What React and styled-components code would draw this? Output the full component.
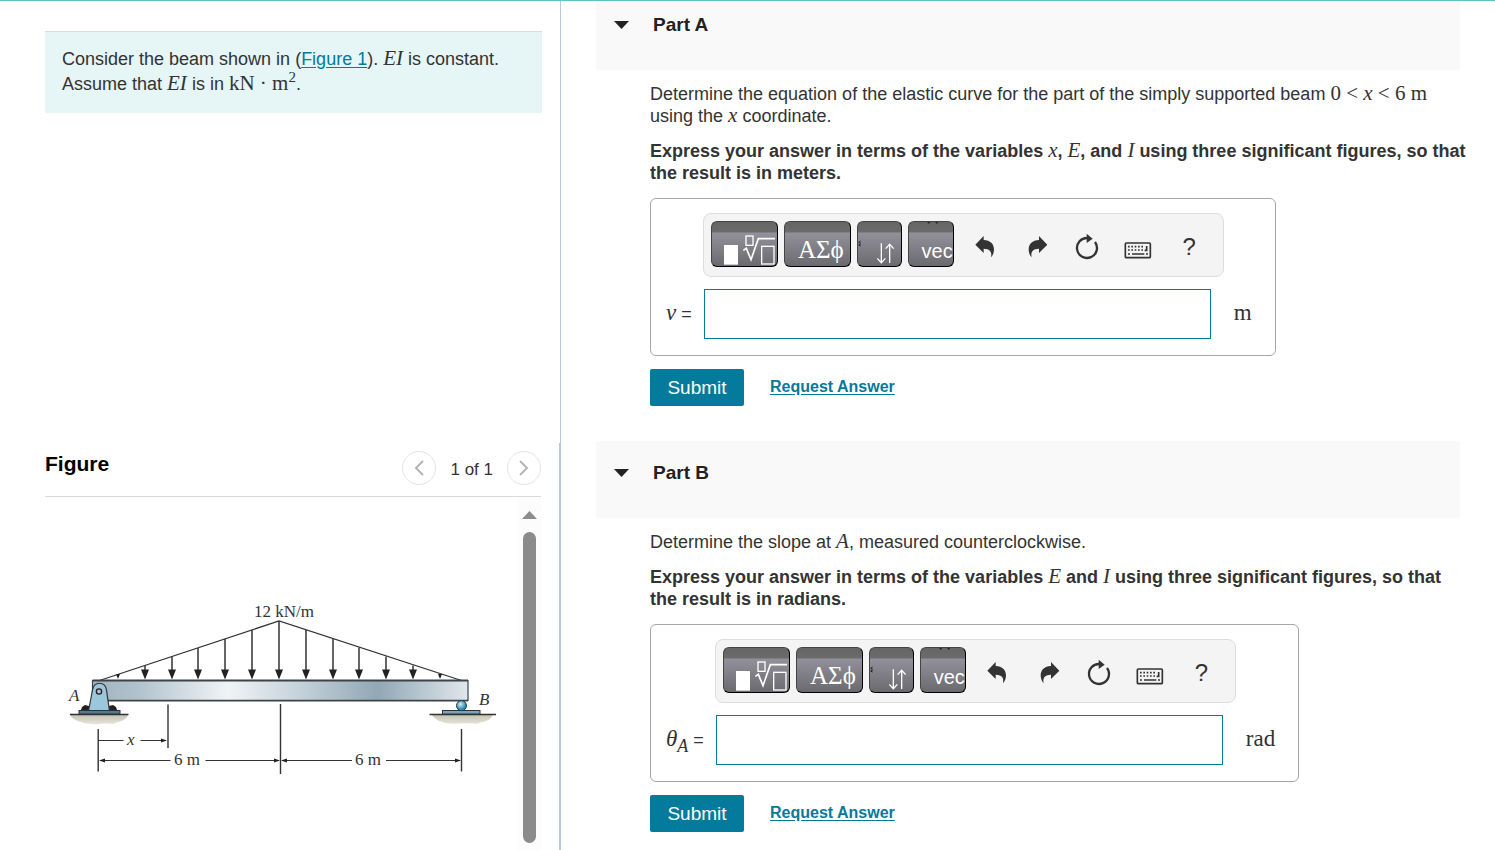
import styled, { createGlobalStyle } from "styled-components";

const GlobalStyle = createGlobalStyle`
    *, *::before, *::after {
        box-sizing: border-box;
    }

    body {
        margin: 0;
        background: #fff;
        color: #333;
        font-family: "Liberation Sans", Arial, sans-serif;
        font-size: 18px;
        line-height: 22px;
    }

    p, h2 {
        margin: 0;
    }

    button {
        font: inherit;
        color: inherit;
        cursor: pointer;
    }
`;

const Page = styled.div`
    display: grid;
    grid-template-columns: minmax(0, 561fr) minmax(0, 934fr);
    height: 100vh;
    border-top: 1px solid #5bc3c8;
    overflow: hidden;
`;

const Sidebar = styled.aside`
    display: grid;
    grid-template-rows: minmax(0, 442fr) minmax(0, 407fr);
    min-height: 0;
`;

const Intro = styled.section`
    padding: 30px 18px 0 45px;
    border-right: 1px solid #b8cbde;
`;

const IntroText = styled.p`
    padding: 15px 16px 16px 17px;
    background: #e6f5f6;
    border-top: 1px solid #d8dddd;
    line-height: 25px;
`;

const TextLink = styled.a`
    color: #047a9c;
    text-decoration: underline;
    text-underline-offset: 2px;
`;

const MathText = styled.span`
    font-family: "Liberation Serif", "Times New Roman", serif;
    font-size: ${({ $large }) => ($large ? "23px" : "21px")};
    font-weight: 400;
    font-style: ${({ $upright }) => ($upright ? "normal" : "italic")};
    line-height: 0;
    white-space: nowrap;

    sup, sub {
        font-size: ${({ $large }) => ($large ? "18px" : "15px")};
        line-height: 0;
    }
`;

const FigurePanel = styled.section`
    display: flex;
    flex-direction: column;
    min-height: 0;
    padding: 0 18px 0 45px;
    border-right: 2px solid #b8cbde;
`;

const FigureHeader = styled.header`
    display: flex;
    justify-content: space-between;
    height: 54px;
    border-bottom: 1px solid #d9d9d9;
`;

const FigureTitle = styled.h2`
    padding-top: 10px;
    font-size: 21px;
    color: #000;
`;

const Pager = styled.div`
    display: flex;
    align-items: center;
    gap: 14px;
    padding-bottom: 4px;
    font-size: 17px;

    span {
        padding-top: 4px;
    }
`;

const PagerButton = styled.button`
    display: flex;
    align-items: center;
    justify-content: center;
    width: 34px;
    height: 34px;
    padding: 0;
    background: #fff;
    border: 1px solid #e4e4e4;
    border-radius: 50%;
`;

const FigureBody = styled.div`
    display: flex;
    flex: 1;
    min-height: 0;
`;

const FigureView = styled.div`
    flex: 1;
    min-width: 0;
    padding: 98px 13px 0 15px;
    overflow: hidden;

    svg {
        display: block;
        width: 100%;
        max-width: 445px;
    }
`;

const ScrollTrack = styled.div`
    display: flex;
    flex-direction: column;
    align-items: center;
    gap: 13px;
    width: 23px;
    padding: 14px 0 7px;
    background: #fcfcfc;
`;

const ScrollThumb = styled.div`
    flex: 1;
    width: 13px;
    border-radius: 7px;
    background: #8b8b8b;
`;

const Main = styled.main`
    min-height: 0;
    padding: 0 19px 0 35px;
    overflow: hidden;
`;

const Part = styled.section`
    margin-bottom: 35px;

    &:first-child {
        margin-top: -8px;
    }
`;

const PartHeader = styled.header`
    display: flex;
    gap: 24px;
    height: 77px;
    margin-right: 16px;
    padding: 21px 18px;
    background: #f9f9f9;
`;

const PartToggle = styled.button`
    display: flex;
    align-items: center;
    height: 22px;
    padding: 0;
    border: 0;
    background: none;
`;

const PartTitle = styled.h2`
    font-size: 19px;
    color: #222;
`;

const PartBody = styled.div`
    padding: 13px 0 0 54px;
`;

const Instructions = styled.p`
    margin: 13px 0 14px;
    font-weight: 700;
`;

const AnswerBox = styled.form`
    display: grid;
    grid-template-columns: auto auto auto;
    align-items: center;
    row-gap: 12px;
    width: fit-content;
    padding: 14px 23px 16px 15px;
    border: 1px solid #a6a6a6;
    border-radius: 6px;
`;

const Toolbar = styled.div`
    grid-column: 2 / 4;
    display: flex;
    width: fit-content;
    padding: 7px 8px 9px 7px;
    background: #f4f4f4;
    border: 1px solid #ddd;
    border-radius: 8px;
`;

const PaletteButton = styled.button`
    display: flex;
    align-items: flex-end;
    justify-content: flex-end;
    width: ${({ $width }) => $width || 67}px;
    height: 46px;
    margin-right: 6px;
    padding: 0;
    overflow: hidden;
    color: #fff;
    background: linear-gradient(#656565 0, #6b6b6b 10px, #92919b 11px, #6a6a6e 100%);
    border: 1px solid #000;
    border-top-color: #444;
    border-left-color: #444;
    border-radius: 6px;

    svg {
        flex: none;
    }
`;

const Greek = styled.span`
    padding: 0 6px 2px 0;
    font-family: "Liberation Serif", serif;
    font-size: 25px;
    line-height: 28px;
`;

const VecMark = styled.span`
    display: flex;
    flex-direction: column;
    align-items: flex-end;
    justify-content: space-between;
    height: 100%;
    padding-bottom: 4px;
    font-size: 20px;
`;

const IconButton = styled.button`
    display: flex;
    align-items: center;
    justify-content: center;
    width: 51px;
    height: 46px;
    padding: 0;
    border: 0;
    background: none;
    color: #333;
`;

const HelpMark = styled.span`
    padding-top: 5px;
    font-size: 24px;
`;

const FieldLabel = styled.label`
    padding-right: 11px;
    white-space: nowrap;
`;

const AnswerInput = styled.input`
    width: 507px;
    height: 50px;
    margin-left: 1px;
    padding: 0 10px;
    border: 1px solid #047a9c;
    background: #fff;
    font: inherit;
`;

const Unit = styled.span`
    padding-left: 23px;
`;

const Actions = styled.div`
    display: flex;
    align-items: center;
    gap: 26px;
    margin-top: 13px;
`;

const SubmitButton = styled.button`
    width: 94px;
    height: 37px;
    padding: 0;
    border: 0;
    border-radius: 2px;
    background: #047a9c;
    color: #fff;
    font-size: 19px;
`;

const RequestLink = styled(TextLink)`
    padding-bottom: 2px;
    font-size: 16px;
    font-weight: 700;
`;

const Chevron = ({ right }) => (
    <svg width="12" height="18" viewBox="0 0 12 18" fill="none" stroke="#b4b4b4" strokeWidth="2">
        <path d={right ? "M2 2l7 7-7 7" : "M10 2L3 9l7 7"} />
    </svg>
);

const TemplateIcon = () => (
    <svg width="65" height="44" viewBox="3 3 195 132" fill="none" stroke="#fff" strokeWidth="4">
        <rect x="39" y="72" width="42" height="59" fill="#fff" stroke="none" />
        <rect x="105" y="45" width="21" height="28" />
        <path d="M97 88l9-6 14 34 22-63h50" strokeWidth="5" />
        <rect x="152" y="76" width="37" height="53" />
    </svg>
);

const ArrowsIcon = () => (
    <svg width="43" height="44" viewBox="3 3 129 132" fill="none" stroke="#fff" strokeWidth="4">
        <path d="M73 67v57M61 112l12 13 12-13M98 126V70M86 83l12-13 12 13" />
        <path d="M11 60l-6 4 6 3M11 69l-6 3 6 3" stroke="#222" strokeWidth="3" />
    </svg>
);

const UndoIcon = ({ flip }) => (
    <svg width="34" height="34" viewBox="0 0 102 102" fill="currentColor">
        <path
            transform={flip ? "translate(107 0) scale(-1 1)" : undefined}
            d="M22 53L47 27V39C67 40 78 51 78 67C78 79 73 87 69 91C72 76 68 66 47 65V78Z"
        />
    </svg>
);

const ResetIcon = () => (
    <svg width="34" height="34" viewBox="0 0 102 102" fill="none" stroke="currentColor" strokeWidth="7">
        <path d="M75 45A30 30 0 1 1 53 33" />
        <path d="M50 20v28l18-13z" fill="currentColor" stroke="none" />
    </svg>
);

const KeyboardIcon = () => (
    <svg width="34" height="34" viewBox="0 0 102 102" fill="none" stroke="currentColor" strokeWidth="5">
        <rect x="13" y="48" width="75" height="44" rx="3" />
        <path d="M21 59h49M21 69h49" strokeDasharray="5 5" />
        <path d="M77 57v13h-6M21 81h6M33 81h37M75 81h6" />
    </svg>
);

const LOAD_ARROWS = [118, 145, 172, 198, 225, 252, 279, 306, 333, 359, 386, 413, 440];

const loadTop = (x) => 621 + (x < 279 ? 279 - x : x - 279) * 0.332;

const BeamFigure = () => (
    <svg viewBox="60 595 445 185" role="img" aria-label="Simply supported beam with a triangular load">
        <defs>
            <linearGradient id="steel">
                <stop offset="0" stopColor="#9fb4c0" />
                <stop offset="0.12" stopColor="#b1c2cc" />
                <stop offset="0.36" stopColor="#f0f4f6" />
                <stop offset="0.55" stopColor="#c5d2da" />
                <stop offset="0.76" stopColor="#91a8b5" />
                <stop offset="1" stopColor="#e0e7ec" />
            </linearGradient>
            <linearGradient id="ground" x2="0" y2="1">
                <stop offset="0" stopColor="#c6c4b3" />
                <stop offset="1" stopColor="#e6e4dc" />
            </linearGradient>
            <radialGradient id="roller" cx="0.4" cy="0.35">
                <stop offset="0" stopColor="#d4edf5" />
                <stop offset="1" stopColor="#2f8eb0" />
            </radialGradient>
        </defs>

        <g stroke="#333" strokeWidth="1.3" fill="none">
            <path d="M98 681L279 621L463 681" />
            {LOAD_ARROWS.map((x) => (
                <path key={x} d={`M${x} ${loadTop(x)}V677`} strokeWidth="1.5" />
            ))}
        </g>
        <g fill="#222">
            {LOAD_ARROWS.map((x, i) => {
                const small = i === 0 || i === LOAD_ARROWS.length - 1;
                return <path key={x} d={small ? `M${x - 2} 674h4l-2 5z` : `M${x - 4} 669.5h8l-4 10z`} />;
            })}
        </g>
        <rect x="92.5" y="680.5" width="375.5" height="20.5" fill="url(#steel)" />
        <path d="M92.5 680.5H468M92.5 700.7H468" stroke="#3c444a" strokeWidth="1.8" />
        <path d="M92.5 680V701M468 680V701" stroke="#3c444a" strokeWidth="1.2" />

        <path d="M70 715H128C125 722 118 721 113 724C103 722 95 726 84 723C79 721 74 721 70 715Z" fill="url(#ground)" />
        <path d="M432 715H493C489 722 483 721 477 724C466 722 455 725 445 723C439 721 436 720 432 715Z" fill="url(#ground)" />
        <path d="M70 714.5H128.5M429.5 714.5H496" stroke="#333" strokeWidth="1.5" />
        <path d="M81 710l1-3 3-2 4 1v5zM117 710l-1-3-3-2-4 1v5z" fill="#222" />
        <path d="M88.5 711L92.5 690C94 681 105 681 106.5 690L109.5 711Z" fill="#9cc6dc" stroke="#333" strokeWidth="1.2" />
        <rect x="79" y="710.5" width="41" height="3.5" fill="#58788c" stroke="#29333a" />
        <circle cx="99" cy="691.5" r="2.6" fill="#b9c4ca" stroke="#222" strokeWidth="1.4" />
        <rect x="442.5" y="710.5" width="37.5" height="3.5" fill="#7fa3b9" stroke="#29333a" />
        <circle cx="461.5" cy="705.7" r="5" fill="url(#roller)" stroke="#1d3d4b" />

        <g stroke="#333" strokeWidth="1.4">
            <path d="M98.2 729V771.5M168 704.5V748M280.5 704V774M461.5 729V771.5" />
            <path
                d="M98 740.5H123.5M140.5 740.5H166M100 760.5H170.5M205.5 760.5H279M282 760.5H352M386 760.5H460"
                strokeWidth="1.2"
            />
        </g>
        <path
            d="M167 740.5l-6-2v4zM99 760.5l6-2v4zM280 760.5l-6-2v4zM281 760.5l6-2v4zM461 760.5l-6-2v4z"
            fill="#222"
        />

        <g fontFamily="Liberation Serif, serif" fontSize="17" fill="#333">
            <text x="254" y="617">12 kN/m</text>
            <text x="174" y="765">6 m</text>
            <text x="355" y="765">6 m</text>
            <g fontStyle="italic">
                <text x="69" y="701">A</text>
                <text x="479" y="705">B</text>
                <text x="127" y="745">x</text>
            </g>
        </g>
    </svg>
);

const AnswerForm = ({ id, label, unit }) => (
    <>
        <AnswerBox id={`form-${id}`} onSubmit={(e) => e.preventDefault()}>
            <Toolbar>
                <PaletteButton type="button" aria-label="Templates">
                    <TemplateIcon />
                </PaletteButton>
                <PaletteButton type="button" aria-label="Symbols">
                    <Greek>ΑΣϕ</Greek>
                </PaletteButton>
                <PaletteButton type="button" $width={45} aria-label="Relations">
                    <ArrowsIcon />
                </PaletteButton>
                <PaletteButton type="button" $width={46}>
                    <VecMark>
                        <svg width="26" height="2" viewBox="0 0 26 2" fill="#222">
                            <path d="M0 0h3l-1 2zM8 0h3l-1 2z" />
                        </svg>
                        vec
                    </VecMark>
                </PaletteButton>
                <IconButton type="button" aria-label="Undo"><UndoIcon /></IconButton>
                <IconButton type="button" aria-label="Redo"><UndoIcon flip /></IconButton>
                <IconButton type="button" aria-label="Reset"><ResetIcon /></IconButton>
                <IconButton type="button" aria-label="Keyboard"><KeyboardIcon /></IconButton>
                <IconButton type="button" aria-label="Help"><HelpMark>?</HelpMark></IconButton>
            </Toolbar>
            <FieldLabel htmlFor={`answer-${id}`}>{label} =</FieldLabel>
            <AnswerInput id={`answer-${id}`} type="text" autoComplete="off" />
            <Unit><MathText $upright $large>{unit}</MathText></Unit>
        </AnswerBox>
        <Actions>
            <SubmitButton type="submit" form={`form-${id}`}>Submit</SubmitButton>
            <RequestLink href="#request">Request Answer</RequestLink>
        </Actions>
    </>
);

const PartSection = ({ title, children }) => (
    <Part>
        <PartHeader>
            <PartToggle type="button" aria-label={`Collapse ${title}`}>
                <svg width="15" height="8" viewBox="0 0 15 8" fill="#222">
                    <path d="M0 0h15L7.5 8z" />
                </svg>
            </PartToggle>
            <PartTitle>{title}</PartTitle>
        </PartHeader>
        <PartBody>{children}</PartBody>
    </Part>
);

const App = () => {
    return (
        <>
            <GlobalStyle />
            <Page>
                <Sidebar>
                    <Intro>
                        <IntroText>
                            Consider the beam shown in (<TextLink href="#figure">Figure 1</TextLink>).{" "}
                            <MathText>EI</MathText> is constant. Assume that <MathText>EI</MathText> is in{" "}
                            <MathText $upright>kN · m<sup>2</sup></MathText>.
                        </IntroText>
                    </Intro>
                    <FigurePanel id="figure">
                        <FigureHeader>
                            <FigureTitle>Figure</FigureTitle>
                            <Pager>
                                <PagerButton type="button" aria-label="Previous figure"><Chevron /></PagerButton>
                                <span>1 of 1</span>
                                <PagerButton type="button" aria-label="Next figure"><Chevron right /></PagerButton>
                            </Pager>
                        </FigureHeader>
                        <FigureBody>
                            <FigureView>
                                <BeamFigure />
                            </FigureView>
                            <ScrollTrack>
                                <svg width="15" height="8" viewBox="0 0 15 8" fill="#8b8b8b">
                                    <path d="M0 8h15L7.5 0z" />
                                </svg>
                                <ScrollThumb />
                            </ScrollTrack>
                        </FigureBody>
                    </FigurePanel>
                </Sidebar>
                <Main>
                    <PartSection title="Part A">
                        <p>
                            Determine the equation of the elastic curve for the part of the simply supported beam{" "}
                            <MathText $upright>0 &lt; <i>x</i> &lt; 6 m</MathText>
                            <br />
                            using the <MathText>x</MathText> coordinate.
                        </p>
                        <Instructions>
                            Express your answer in terms of the variables <MathText>x</MathText>,{" "}
                            <MathText>E</MathText>, and <MathText>I</MathText> using three significant figures, so
                            that the result is in meters.
                        </Instructions>
                        <AnswerForm id="a" label={<MathText $large>v</MathText>} unit="m" />
                    </PartSection>
                    <PartSection title="Part B">
                        <p>
                            Determine the slope at <MathText>A</MathText>, measured counterclockwise.
                        </p>
                        <Instructions>
                            Express your answer in terms of the variables <MathText>E</MathText> and{" "}
                            <MathText>I</MathText> using three significant figures, so that
                            <br />
                            the result is in radians.
                        </Instructions>
                        <AnswerForm id="b" label={<MathText $large>θ<sub>A</sub></MathText>} unit="rad" />
                    </PartSection>
                </Main>
            </Page>
        </>
    );
};

export default App;
